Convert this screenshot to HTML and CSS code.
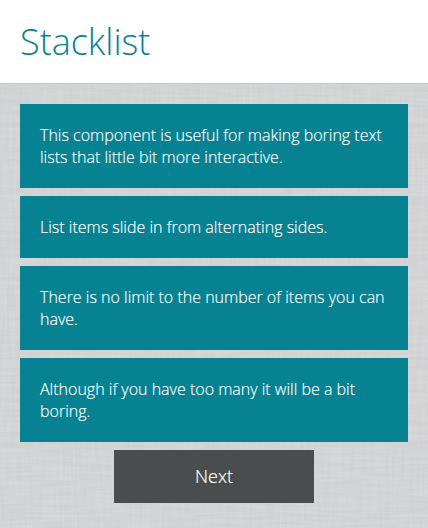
FILE: index.html
```html
<!DOCTYPE html>
<html lang="en"><head><meta charset="utf-8"><title>Stacklist</title><link rel="stylesheet" href="styles.css"></head>
<body>
<svg class="linen" aria-hidden="true">
<filter id="warp" x="0" y="0" width="100%" height="100%" color-interpolation-filters="sRGB"><feTurbulence type="fractalNoise" baseFrequency="0.4 0.025" numOctaves="2" seed="4"/><feColorMatrix values="0.065 0 0 0 0.796  0.065 0 0 0 0.800  0.065 0 0 0 0.808  0 0 0 0 1"/></filter>
<filter id="weft" x="0" y="0" width="100%" height="100%" color-interpolation-filters="sRGB"><feTurbulence type="fractalNoise" baseFrequency="0.025 0.4" numOctaves="2" seed="9"/><feColorMatrix values="0.065 0 0 0 0.796  0.065 0 0 0 0.800  0.065 0 0 0 0.808  0 0 0 0 1"/></filter>
<rect width="100%" height="100%" filter="url(#warp)"/>
<rect width="100%" height="100%" filter="url(#weft)" opacity="0.5"/>
</svg>
<header class="header"><h1 class="title">Stacklist</h1></header>
<main class="content">
<ul class="list">
<li class="item">This component is useful for making boring text lists that little bit more interactive.</li>
<li class="item">List items slide in from alternating sides.</li>
<li class="item">There is no limit to the number of items you can have.</li>
<li class="item">Although if you have too many it will be a bit boring.</li>
</ul>
<button class="next">Next</button>
</main>
</body></html>
```
FILE: styles.css
```css
* { box-sizing: border-box; }
body { margin: 0; min-height: 528px; font-family: "Open Sans", sans-serif; background: #d4d5d7; }
.linen { position: absolute; inset: 0; z-index: -1; width: 100%; height: 528px; }
.header { height: 84px; background: #fff; padding: 16px 20px 0; border-bottom: 1px solid #c5c6c8; }
.title { margin: 0; font-size: 36px; line-height: 52px; font-weight: 300; color: #078292; }
.content { padding: 20px 20px 25px; }
.list { list-style: none; margin: 0 0 8px; padding: 0; display: grid; gap: 8px; }
.item { padding: 20px; background: #078292; color: #fff; font-size: 16px; line-height: 22px; font-weight: 300; -webkit-text-stroke: .15px; }
.next { display: block; width: 200px; height: 53px; margin: 0 auto; border: 0; padding: 0 0 1px; background: #4a4d4e; color: #fff; font: 300 18px "Open Sans", sans-serif; -webkit-text-stroke: .2px; }
```
